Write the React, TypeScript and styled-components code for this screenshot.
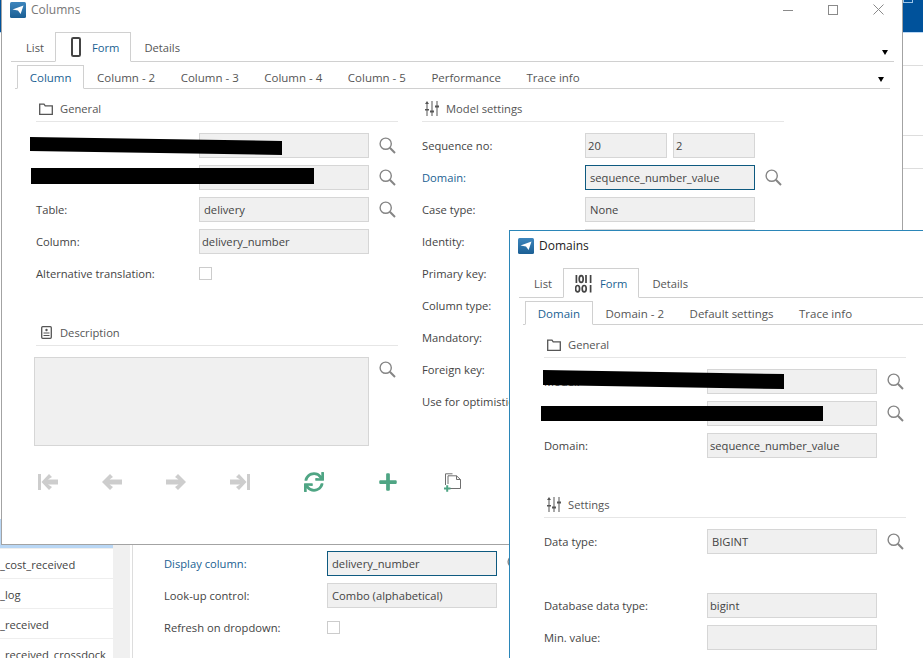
import * as React from "react";
import { FunctionComponent, ReactNode } from "react";
import styled, { createGlobalStyle } from "styled-components";
import { FaPlus, FaSync } from "react-icons/fa";

const GlobalStyle = createGlobalStyle`
  html, body {
    margin: 0;
    padding: 0;
    background: #fff;
    overflow: hidden;
  }
  * {
    box-sizing: border-box;
  }
`;

const Page = styled.div`
  position: relative;
  width: 923px;
  height: 658px;
  overflow: hidden;
  background: #fff;
  color: #444;
  font-family: "Open Sans", "Noto Sans", sans-serif;
  font-size: 11.2px;
`;

/* the application behind the two dialogs */
const AppHeader = styled.div`
  height: 33px;
  padding-left: 903px;
  background: #00529b;
  border-bottom: 1px solid #b9d7f5;
`;

const HeaderGlyph = styled.div`
  width: 10px;
  height: 3px;
  border: 1px solid #9cc4e8;
  border-top: none;
`;

const AppBody = styled.div`
  display: flex;
  height: 625px;
`;

const ListColumn = styled.div`
  width: 113px;
  flex: none;
  padding-top: 486px;
`;

const ListRow = styled.div<{ $selected?: boolean }>`
  height: 30px;
  line-height: 30px;
  white-space: nowrap;
  overflow: hidden;
  background: ${(p) => (p.$selected ? "#b9d7f5" : "#fff")};
  border-bottom: 1px solid #eee;
  padding-top: 1px;
`;

const ScrollTrack = styled.div`
  width: 17px;
  flex: none;
  margin-right: 2px;
  background: #f0f0f0;
`;

const BackForm = styled.div`
  flex: 1;
  border-left: 1px solid #ddd;
  padding: 518px 0 0 31px;
`;

const SideColumn = styled.div`
  width: 20px;
  flex: none;
`;

const SideRow = styled.div<{ $h: number }>`
  height: ${(p) => p.$h}px;
  border-bottom: 1px solid #ddd;
`;

/* dialogs */
const Window = styled.div<{ $x: number; $y: number; $focused?: boolean }>`
  position: absolute;
  left: ${(p) => p.$x}px;
  top: ${(p) => p.$y}px;
  width: 902px;
  height: ${(p) => (p.$focused ? "600px" : "551px")};
  background: #fff;
  border: 1px solid ${(p) => (p.$focused ? "#2b86b8" : "#a3a3a3")};
`;

const TitleBar = styled.div`
  display: flex;
  align-items: center;
  height: 37px;
  padding: 0 0 8px 8px;
`;

const TitleText = styled.span<{ $focused?: boolean }>`
  margin-left: 5px;
  font-size: 12px;
  color: ${(p) => (p.$focused ? "#222" : "#777")};
`;

const WindowControls = styled.div`
  display: flex;
  align-items: center;
  gap: 35px;
  margin-left: auto;
  margin-right: 18px;
`;

const OuterTabs = styled.div`
  display: flex;
  align-items: flex-start;
  height: 30px;
  margin: 0 8px 0 9px;
  border-bottom: 1px solid #d0d0d0;
`;

const OuterTab = styled.div<{ $active?: boolean; $pad: string }>`
  display: flex;
  align-items: center;
  padding: ${(p) => p.$pad};
  height: 30px;
  color: ${(p) => (p.$active ? "#1a5f92" : "#555")};
  background: ${(p) => (p.$active ? "#fff" : "transparent")};
  border: 1px solid ${(p) => (p.$active ? "#d0d0d0" : "transparent")};
  border-bottom: 1px solid ${(p) => (p.$active ? "#fff" : "transparent")};
`;

const TabIcon = styled.span`
  display: flex;
  justify-content: center;
  width: 20px;
  margin-right: 6px;
`;

const InnerTabs = styled.div`
  display: flex;
  align-items: flex-start;
  height: 24px;
  margin: 3px 12px 0 13px;
  border-bottom: 1px solid #d0d0d0;
`;

const InnerTab = styled.div<{ $active?: boolean }>`
  display: flex;
  align-items: center;
  height: 24px;
  padding: 0 11.75px;
  font-size: 11.5px;
  color: ${(p) => (p.$active ? "#1a5f92" : "#555")};
  background: ${(p) => (p.$active ? "#fff" : "transparent")};
  border: 1px solid ${(p) => (p.$active ? "#d0d0d0" : "transparent")};
  border-bottom: 1px solid ${(p) => (p.$active ? "#fff" : "transparent")};
`;

const InnerStart = styled.div`
  width: 2px;
`;

const DropArrow = styled.span`
  align-self: flex-end;
  margin: 0 6px 6px auto;
  width: 0;
  height: 0;
  border-left: 3.5px solid transparent;
  border-right: 3.5px solid transparent;
  border-top: 5px solid #000;
`;

const FormBody = styled.div`
  display: flex;
  gap: 24px;
  padding: 11px 0 0 34px;
`;

const FormColumn = styled.div`
  width: 362px;
`;

const GroupHeader = styled.div<{ $spaced?: boolean }>`
  display: flex;
  align-items: center;
  height: 22px;
  margin-top: ${(p) => (p.$spaced ? "38px" : "0")};
  margin-bottom: 11px;
  padding: 0 0 4px 2px;
  color: #555;
  border-bottom: 1px solid #e6e6e6;
`;

const GroupIcon = styled.span`
  display: flex;
  justify-content: center;
  width: 16px;
  margin-right: 6px;
`;

const Row = styled.div`
  display: grid;
  grid-template-columns: 163px 170px auto;
  align-items: center;
  height: 25px;
  margin-bottom: 7px;
`;

const Label = styled.span<{ $link?: boolean }>`
  white-space: nowrap;
  color: ${(p) => (p.$link ? "#1a5f92" : "#444")};
`;

const Field = styled.div<{ $focus?: boolean; $tight?: boolean }>`
  height: 25px;
  line-height: 23px;
  padding-left: ${(p) => (p.$tight ? "2px" : "4px")};
  background: #f0f0f0;
  color: #444;
  white-space: nowrap;
  border: 1px solid ${(p) => (p.$focus ? "#0e5a80" : "#d6d6d6")};
`;

const FieldPair = styled.div`
  display: grid;
  grid-template-columns: 82px 82px;
  gap: 6px;
`;

const CheckBox = styled.div`
  width: 13px;
  height: 13px;
  background: #fff;
  border: 1px solid #ccc;
`;

const LookupButton = styled.span`
  display: flex;
  margin-left: 10px;
`;

const DescriptionRow = styled.div`
  display: flex;
  margin-left: -2px;
`;

const DescriptionBox = styled.div`
  width: 335px;
  height: 89px;
  background: #f0f0f0;
  border: 1px solid #d6d6d6;
`;

const DescriptionLookup = styled(LookupButton)`
  margin-top: 4px;
  align-self: flex-start;
`;

const Toolbar = styled.div`
  display: flex;
  align-items: center;
  height: 20px;
  margin-top: 26px;
  margin-left: -20px;
`;

const ToolButton = styled.span<{ $w: number; $shift?: number }>`
  display: flex;
  justify-content: center;
  flex: none;
  width: ${(p) => p.$w}px;
  margin-left: ${(p) => p.$shift ?? 0}px;
`;

const Redaction = styled.div<{ $x: number; $y: number; $w: number; $h: number; $skew: number }>`
  position: absolute;
  left: ${(p) => p.$x}px;
  top: ${(p) => p.$y}px;
  width: ${(p) => p.$w}px;
  height: ${(p) => p.$h}px;
  background: #000;
  clip-path: polygon(0 0, 100% ${(p) => p.$skew}px, 100% 100%, 0 calc(100% - ${(p) => p.$skew}px));
`;

/* drawn icons */
const SearchIcon = () => (
  <svg width="17" height="17" viewBox="0 0 17 17" fill="none" stroke="#858585">
    <circle cx="6.7" cy="6.7" r="5.6" strokeWidth="1.4" />
    <path d="M10.8 10.8 L16 16" strokeWidth="2" />
  </svg>
);

const FolderIcon = () => (
  <svg width="14" height="12" viewBox="0 0 14 12" fill="none" stroke="#555" strokeWidth="1.3">
    <path d="M.7 10.6 V1.2 H5 L6.2 2.8 H13.3 V11.3 H.7 Z" />
  </svg>
);

const SlidersIcon = () => (
  <svg width="14" height="15" viewBox="0 0 14 15" fill="#555">
    <rect x="1.5" y="2" width="1" height="13" />
    <path d="M0 3 L2 0 L4 3 Z" />
    <rect x="0" y="8" width="4" height="1.5" />
    <rect x="6.5" y="0" width="1" height="15" />
    <rect x="5" y="9.5" width="4" height="2" />
    <rect x="11.5" y="0" width="1" height="15" />
    <rect x="10" y="4.5" width="4" height="2" />
  </svg>
);

const NoteIcon = () => (
  <svg width="11" height="13" viewBox="0 0 11 13" fill="none" stroke="#555">
    <rect x=".7" y=".7" width="9.6" height="11.6" rx="1" strokeWidth="1.3" />
    <circle cx="5.5" cy="4" r="1.2" fill="#555" stroke="none" />
    <path d="M2.5 7 H8.5 M2.5 9.5 H8.5" strokeWidth="1.2" />
  </svg>
);

const PhoneIcon = () => (
  <svg width="10" height="20" viewBox="0 0 10 20" fill="none" stroke="#444" strokeWidth="2">
    <rect x="1" y="1" width="8" height="18" rx="1.3" />
  </svg>
);

const BinaryIcon = () => (
  <svg width="17" height="19" viewBox="0 0 17 19" fill="none" stroke="#444" strokeWidth="1.7">
    <path d="M1.4 1 V9 M11 1 V9 M15.6 1 V9 M15.6 11 V18.5" />
    <ellipse cx="6.2" cy="5" rx="2" ry="3.4" />
    <ellipse cx="2.6" cy="14.7" rx="2" ry="3.2" />
    <ellipse cx="9.2" cy="14.7" rx="2" ry="3.2" />
  </svg>
);

const PlaneLogo = () => (
  <svg width="16" height="16" viewBox="0 0 16 16">
    <defs>
      <linearGradient id="logoFill" x1="0" y1="0" x2="0" y2="1">
        <stop offset="0" stopColor="#3d86bd" />
        <stop offset="1" stopColor="#1b5f94" />
      </linearGradient>
    </defs>
    <rect width="16" height="16" rx="1.5" fill="url(#logoFill)" />
    <path d="M2.5 7.6 L13.5 3.6 L10.6 12 L8 8.6 Z" fill="#fff" />
  </svg>
);

const MinimizeIcon = () => (
  <svg width="10" height="10" viewBox="0 0 10 10" stroke="#8a8a8a">
    <path d="M0 5.5 H10" />
  </svg>
);

const MaximizeIcon = () => (
  <svg width="10" height="10" viewBox="0 0 10 10" fill="none" stroke="#8a8a8a">
    <rect x=".5" y=".5" width="9" height="9" />
  </svg>
);

const CloseIcon = () => (
  <svg width="11" height="11" viewBox="0 0 11 11" stroke="#8a8a8a">
    <path d="M.5 .5 L10.5 10.5 M10.5 .5 L.5 10.5" />
  </svg>
);

const NavIcon: FunctionComponent<{ flip?: boolean; stop?: boolean }> = ({ flip, stop }) => (
  <svg width="20" height="16" viewBox="0 0 20 16" fill="#cdcdcd" transform={flip ? "scale(-1 1)" : undefined}>
    {stop && <rect x="0" y="0" width="3" height="16" />}
    <path
      d={
        stop
          ? "M11 0 L14 3 L10 5.5 H20 V10.5 H10 L14 13 L11 16 L3.5 8 Z"
          : "M8 0 L11 3 L7.5 5.5 H20 V10.5 H7.5 L11 13 L8 16 L0 8 Z"
      }
    />
  </svg>
);

const CopyIcon = () => (
  <svg width="18" height="19" viewBox="0 0 18 19" fill="none" stroke="#6f6f6f" strokeWidth="1">
    <path d="M1.5 12 V.8 H8.5" />
    <path d="M4 15.5 H16.5 V6.5 L12.5 2.8 H4 V11" />
    <path d="M12.5 2.8 V6.5 H16.5" />
    <path d="M0 15.5 H6.5 M3.2 12.2 V18.8" stroke="#4fa584" strokeWidth="2" />
  </svg>
);

const EditStub = () => (
  <svg width="18" height="20" viewBox="0 0 18 20" fill="none" stroke="#3e6f9c" strokeWidth="1">
    <path d="M0 18 L3 13" />
  </svg>
);

const Lookup = () => (
  <LookupButton>
    <SearchIcon />
  </LookupButton>
);

const FormRow: FunctionComponent<{
  label?: string;
  link?: boolean;
  children: ReactNode;
  lookup?: boolean;
}> = ({ label, link, children, lookup }) => (
  <Row>
    <Label $link={link}>{label}</Label>
    {children}
    {lookup && <Lookup />}
  </Row>
);

const DialogFrame: FunctionComponent<{
  title: string;
  x: number;
  y: number;
  focused?: boolean;
  controls?: boolean;
  formIcon: ReactNode;
  tabs: string[];
  children: ReactNode;
}> = ({ title, x, y, focused, controls, formIcon, tabs, children }) => (
  <Window $x={x} $y={y} $focused={focused}>
    <TitleBar>
      <PlaneLogo />
      <TitleText $focused={focused}>{title}</TitleText>
      {controls && (
        <WindowControls>
          <MinimizeIcon />
          <MaximizeIcon />
          <CloseIcon />
        </WindowControls>
      )}
    </TitleBar>
    <OuterTabs>
      <OuterTab $pad="0 10px 0 14px">List</OuterTab>
      <OuterTab $active $pad="0 11px 0 10px">
        <TabIcon>{formIcon}</TabIcon>
        Form
      </OuterTab>
      <OuterTab $pad="0 12px">Details</OuterTab>
      <DropArrow />
    </OuterTabs>
    <InnerTabs>
      <InnerStart />
      {tabs.map((tab, i) => (
        <InnerTab key={tab} $active={i === 0}>
          {tab}
        </InnerTab>
      ))}
      <DropArrow />
    </InnerTabs>
    {children}
  </Window>
);

const columnTabs = ["Column", "Column - 2", "Column - 3", "Column - 4", "Column - 5", "Performance", "Trace info"];
const domainTabs = ["Domain", "Domain - 2", "Default settings", "Trace info"];
const modelLabels = ["Identity:", "Primary key:", "Column type:", "Mandatory:", "Foreign key:", "Use for optimistic locking:"];

const App: FunctionComponent = () => (
  <Page>
    <GlobalStyle />
    <AppHeader>
      <HeaderGlyph />
    </AppHeader>
    <AppBody>
      <ListColumn>
        <ListRow $selected />
        <ListRow>_cost_received</ListRow>
        <ListRow>_log</ListRow>
        <ListRow>_received</ListRow>
        <ListRow>_received_crossdock</ListRow>
      </ListColumn>
      <ScrollTrack />
      <BackForm>
        <FormRow label="Display column:" link lookup>
          <Field $focus>delivery_number</Field>
        </FormRow>
        <FormRow label="Look-up control:">
          <Field>Combo (alphabetical)</Field>
        </FormRow>
        <FormRow label="Refresh on dropdown:">
          <CheckBox />
        </FormRow>
      </BackForm>
      <SideColumn>
        <SideRow $h={33} />
        <SideRow $h={70} />
        <SideRow $h={33} />
      </SideColumn>
    </AppBody>

    <DialogFrame title="Columns" x={1} y={-6} controls formIcon={<PhoneIcon />} tabs={columnTabs}>
      <FormBody>
        <FormColumn>
          <GroupHeader>
            <GroupIcon>
              <FolderIcon />
            </GroupIcon>
            General
          </GroupHeader>
          <FormRow lookup>
            <Field />
          </FormRow>
          <FormRow lookup>
            <Field />
          </FormRow>
          <FormRow label="Table:" lookup>
            <Field>delivery</Field>
          </FormRow>
          <FormRow label="Column:">
            <Field $tight>delivery_number</Field>
          </FormRow>
          <FormRow label="Alternative translation:">
            <CheckBox />
          </FormRow>
          <GroupHeader $spaced>
            <GroupIcon>
              <NoteIcon />
            </GroupIcon>
            Description
          </GroupHeader>
          <DescriptionRow>
            <DescriptionBox />
            <DescriptionLookup>
              <SearchIcon />
            </DescriptionLookup>
          </DescriptionRow>
          <Toolbar>
            <ToolButton $w={64}>
              <NavIcon stop />
            </ToolButton>
            <ToolButton $w={64}>
              <NavIcon />
            </ToolButton>
            <ToolButton $w={64}>
              <NavIcon flip />
            </ToolButton>
            <ToolButton $w={64}>
              <NavIcon flip stop />
            </ToolButton>
            <ToolButton $w={84}>
              <FaSync size={20} color="#4fa584" />
            </ToolButton>
            <ToolButton $w={64}>
              <FaPlus size={20} color="#4fa584" />
            </ToolButton>
            <ToolButton $w={64} $shift={1}>
              <CopyIcon />
            </ToolButton>
            <ToolButton $w={64} $shift={1}>
              <EditStub />
            </ToolButton>
          </Toolbar>
        </FormColumn>
        <FormColumn>
          <GroupHeader>
            <GroupIcon>
              <SlidersIcon />
            </GroupIcon>
            Model settings
          </GroupHeader>
          <FormRow label="Sequence no:">
            <FieldPair>
              <Field $tight>20</Field>
              <Field $tight>2</Field>
            </FieldPair>
          </FormRow>
          <FormRow label="Domain:" link lookup>
            <Field $focus>sequence_number_value</Field>
          </FormRow>
          <FormRow label="Case type:">
            <Field>None</Field>
          </FormRow>
          {modelLabels.map((label) => (
            <FormRow key={label} label={label}>
              <Field />
            </FormRow>
          ))}
        </FormColumn>
      </FormBody>
    </DialogFrame>

    <DialogFrame title="Domains" x={509} y={230} focused formIcon={<BinaryIcon />} tabs={domainTabs}>
      <FormBody>
        <FormColumn>
          <GroupHeader>
            <GroupIcon>
              <FolderIcon />
            </GroupIcon>
            General
          </GroupHeader>
          <FormRow label="Model:" lookup>
            <Field />
          </FormRow>
          <FormRow lookup>
            <Field />
          </FormRow>
          <FormRow label="Domain:">
            <Field $tight>sequence_number_value</Field>
          </FormRow>
          <GroupHeader $spaced>
            <GroupIcon>
              <SlidersIcon />
            </GroupIcon>
            Settings
          </GroupHeader>
          <FormRow label="Data type:" lookup>
            <Field>BIGINT</Field>
          </FormRow>
          <Row />
          <FormRow label="Database data type:">
            <Field $tight>bigint</Field>
          </FormRow>
          <FormRow label="Min. value:">
            <Field />
          </FormRow>
        </FormColumn>
      </FormBody>
    </DialogFrame>

    <Redaction $x={30} $y={137} $w={252} $h={18} $skew={4} />
    <Redaction $x={31} $y={168} $w={283} $h={16} $skew={0} />
    <Redaction $x={543} $y={370} $w={241} $h={19} $skew={4} />
    <Redaction $x={541} $y={406} $w={282} $h={15} $skew={0} />
  </Page>
);

export default App;
